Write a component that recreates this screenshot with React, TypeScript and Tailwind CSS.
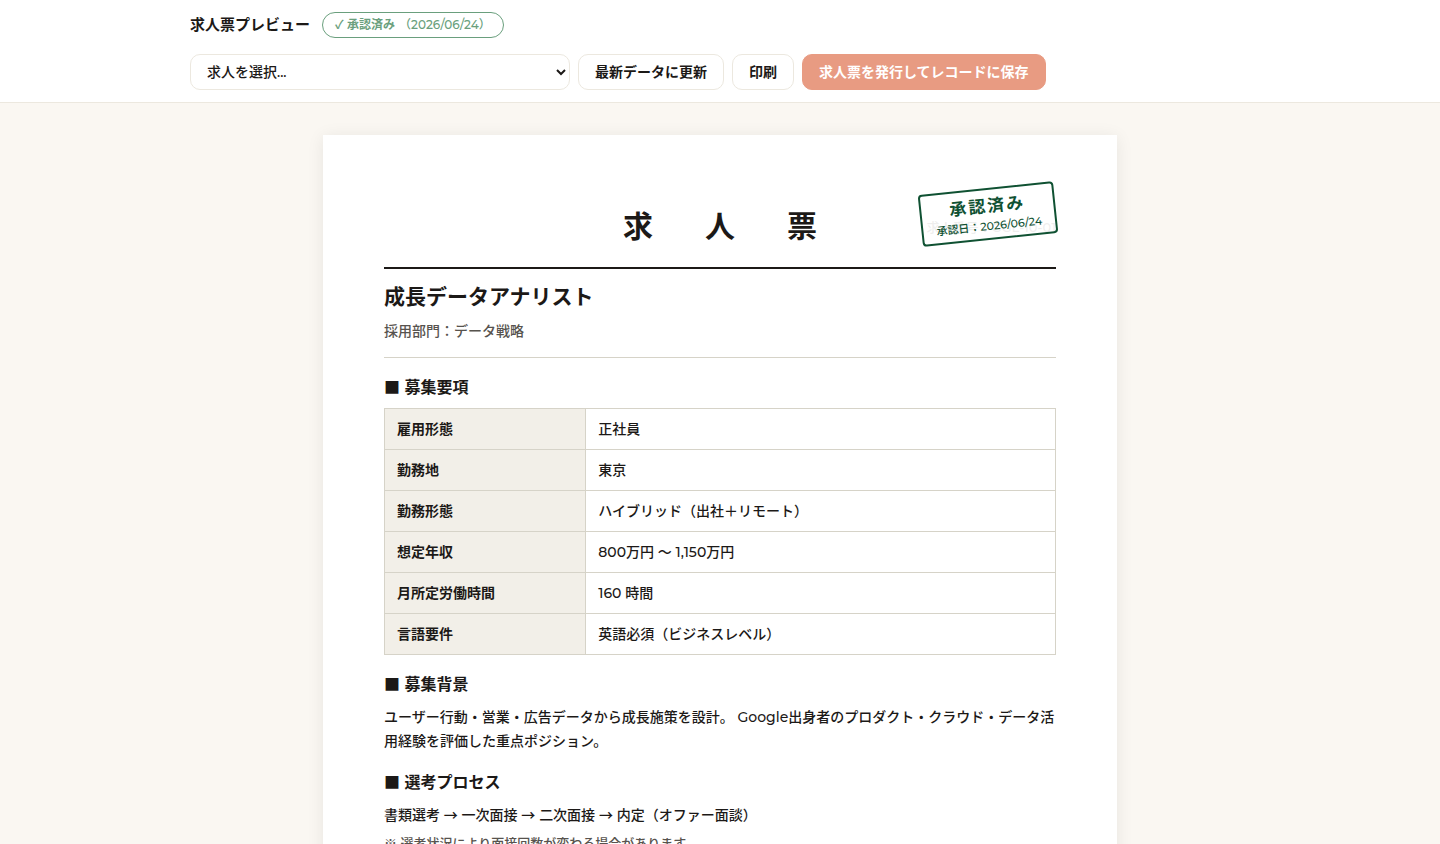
import React from 'react';

interface Requirement {
  label: string;
  value: string;
}

const requirements: Requirement[] = [
  { label: '雇用形態', value: '正社員' },
  { label: '勤務地', value: '東京' },
  { label: '勤務形態', value: 'ハイブリッド（出社＋リモート）' },
  { label: '想定年収', value: '800万円 〜 1,150万円' },
  { label: '月所定労働時間', value: '160 時間' },
  { label: '言語要件', value: '英語必須（ビジネスレベル）' },
];

const steps = ['書類選考', '一次面接', '二次面接', '内定（オファー面談）'];

const SectionTitle: React.FC<{ children: React.ReactNode }> = ({ children }) => (
  <h3 className="text-base leading-7 font-bold">
    <span className="font-['Noto_Sans_CJK_JP',sans-serif] leading-none">■</span> {children}
  </h3>
);

const Toolbar: React.FC = () => (
  <header className="border-b border-[#ece8df] bg-white px-6 py-3">
    <div className="mx-auto flex max-w-[1060px] flex-col gap-4">
      <div className="flex items-center gap-3">
        <h1 className="text-[15px] leading-6 font-bold">求人票プレビュー</h1>
        <span className="flex h-[26px] items-center gap-1 rounded-full border border-[#6a9f7d] px-3 text-xs font-bold text-[#6a9f7d]">
          <span>✓ 承認済み</span>
          <span className="font-medium">（2026/06/24）</span>
        </span>
      </div>
      <div className="flex flex-wrap items-center gap-2">
        <select
          aria-label="求人を選択"
          className="h-9 w-[380px] rounded-[10px] border border-[#ece8df] bg-white px-3 text-sm"
        >
          <option>求人を選択...</option>
        </select>
        <button type="button" className="h-9 rounded-[10px] border border-[#ece8df] bg-white px-4 text-sm font-bold">
          最新データに更新
        </button>
        <button type="button" className="h-9 rounded-[10px] border border-[#ece8df] bg-white px-4 text-sm font-bold">
          印刷
        </button>
        <button
          type="button"
          disabled
          className="h-9 rounded-[10px] border border-[#e89b82] bg-[#e89b82] px-4 text-sm font-bold text-white"
        >
          求人票を発行してレコードに保存
        </button>
      </div>
    </div>
  </header>
);

const ApprovalStamp: React.FC = () => (
  <div className="absolute top-0 right-0 -rotate-6 rounded border-2 border-[#0f5132] bg-white/90 px-[13px] py-1 text-center text-[#0f5132]">
    <div className="text-[17px] leading-6 font-bold tracking-[2px]">承認済み</div>
    <div className="text-[11px] leading-4 font-medium">承認日：2026/06/24</div>
  </div>
);

export default function App() {
  return (
    <div
      lang="ja"
      className="min-h-screen bg-[#faf7f2] font-['Montserrat','Noto_Sans_CJK_JP',sans-serif] font-medium text-[#1c1917]"
    >
      <Toolbar />
      <main className="px-6 py-8">
        <article className="mx-auto max-w-[794px] bg-white px-[61px] pt-[53px] pb-16 shadow-[0_2px_16px_rgba(0,0,0,0.08)]">
          <div className="relative border-b-2 border-[#1c1917] pt-[17px] pb-[18px]">
            <h2 className="text-center indent-[11px] text-[30px] leading-[44px] font-bold tracking-[11px]">
              求　人　票
            </h2>
            <p className="absolute right-0 bottom-8 text-[13px] leading-4 text-[#57534e]">求人番号：GGL-10-01</p>
            <ApprovalStamp />
          </div>

          <div className="border-b border-[#d6d3c8] pt-2 pb-[14px]">
            <h2 className="text-[21px] leading-10 font-bold">成長データアナリスト</h2>
            <p className="mt-0.5 text-sm leading-6 text-[#57534e]">採用部門：データ戦略</p>
          </div>

          <section className="pt-4">
            <SectionTitle>募集要項</SectionTitle>
            <table className="mt-1.5 w-full table-fixed border-collapse text-sm leading-6">
              <tbody>
                {requirements.map((item) => (
                  <tr key={item.label}>
                    <th scope="row" className="w-[30%] border border-[#d6d3c8] bg-[#f2efe8] px-3 py-2 text-left font-bold">
                      {item.label}
                    </th>
                    <td className="border border-[#d6d3c8] px-3 py-2">{item.value}</td>
                  </tr>
                ))}
              </tbody>
            </table>
          </section>

          <section className="pt-4">
            <SectionTitle>募集背景</SectionTitle>
            <p className="mt-1.5 text-sm leading-6">
              ユーザー行動・営業・広告データから成長施策を設計。 Google出身者のプロダクト・クラウド・データ活用経験を評価した重点ポジション。
            </p>
          </section>

          <section className="pt-4">
            <SectionTitle>選考プロセス</SectionTitle>
            <p className="mt-1.5 text-sm leading-6">
              {steps.map((step, idx) => (
                <React.Fragment key={step}>
                  {idx > 0 && (
                    <>
                      {' '}
                      <span className="font-['Noto_Sans_CJK_JP',sans-serif] leading-none">→</span>{' '}
                    </>
                  )}
                  {step}
                </React.Fragment>
              ))}
            </p>
            <p className="mt-1 text-[13px] leading-6 text-[#57534e]">※ 選考状況により面接回数が変わる場合があります。</p>
          </section>
        </article>
      </main>
    </div>
  );
}
